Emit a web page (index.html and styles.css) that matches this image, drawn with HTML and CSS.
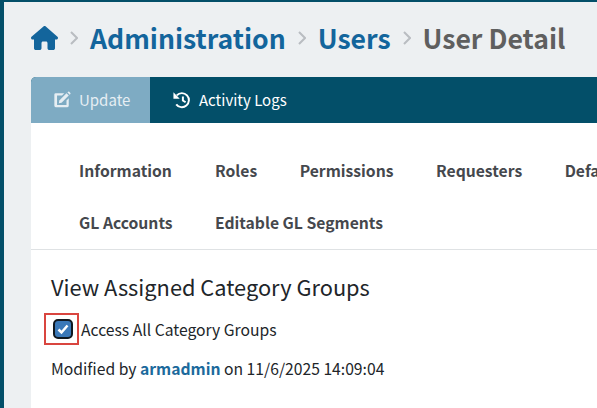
FILE: index.html
```html
<!DOCTYPE html>
<html>

<head>
	<title>User Detail</title>
	<link rel="stylesheet" href="styles.css">
</head>

<body>
	<div class="page">
		<div class="breadcrumb">
			<svg class="home-icon" viewBox="0 0 576 512"><path d="M575.800 255.500c0 18-15 32.100-32 32.100h-32l.7 160.200c0 2.700-.2 5.400-.5 8.100V472c0 22.100-17.900 40-40 40H392c-22.100 0-40-17.900-40-40V360c0-17.700-14.300-32-32-32h-64c-17.700 0-32 14.300-32 32v112c0 22.100-17.900 40-40 40H104c-22.100 0-40-17.900-40-40V287.500H32c-18 0-32-14-32-32.100 0-9 3-17 10-24L266.400 8c7-7 15-8 22-8s15 2 21 7l255.400 224.500c8 7 12 15 11 24z"/></svg>
			<svg class="chevron" viewBox="0 0 8 14"><path d="M1 1l6 6-6 6"/></svg>
			<a class="crumb">Administration</a>
			<svg class="chevron" viewBox="0 0 8 14"><path d="M1 1l6 6-6 6"/></svg>
			<a class="crumb">Users</a>
			<svg class="chevron" viewBox="0 0 8 14"><path d="M1 1l6 6-6 6"/></svg>
			<span class="crumb current">User Detail</span>
		</div>

		<div class="card">
			<div class="toolbar">
				<div class="tool tool-active">
					<svg class="tool-icon" viewBox="0 0 20 20"><path d="M3 2.500h9.500L10 5H4.500v10.500H15V10.500l2.500-2.500v8.500a1.500 1.500 0 0 1-1.500 1.500H3a1.500 1.500 0 0 1-1.500-1.500V4A1.500 1.500 0 0 1 3 2.500z"/><path d="M7 10.500L15 2.500 17.500 5 9.500 13l-3 .5z"/><path d="M16 1.500l.8-.6a1 1 0 0 1 1.300 0l1.200 1.200a1 1 0 0 1 0 1.300l-.8.8z"/></svg>
					Update
				</div>
				<div class="tool">
					<svg class="tool-icon" viewBox="0 0 20 20"><path class="history" d="M4.200 4.800A7.800 7.800 0 1 1 3.600 14.800"/><path d="M.5 1.500l7 7h-7z"/><path class="history" d="M11 6v4.500l3 2"/></svg>
					Activity Logs
				</div>
			</div>

			<div class="card-body">
				<div class="tabs">
					<div class="tab-row">
						<a class="tab tab-info">Information</a>
						<a class="tab">Roles</a>
						<a class="tab">Permissions</a>
						<a class="tab">Requesters</a>
						<a class="tab">Defaults</a>
					</div>
					<div class="tab-row">
						<a class="tab tab-info">GL Accounts</a>
						<a class="tab">Editable GL Segments</a>
					</div>
				</div>

				<div class="section">
					<h2>View Assigned Category Groups</h2>
					<div class="check-row">
						<span class="check-outline">
							<span class="checkbox">
								<svg viewBox="0 0 14 14"><path d="M2.500 7.500l3 3 6-7"/></svg>
							</span>
						</span>
						<label>Access All Category Groups</label>
					</div>
					<p class="modified">Modified by <a>armadmin</a> on 11/6/2025 14:09:04</p>
				</div>
			</div>
		</div>
	</div>
</body>

</html>
```

FILE: styles.css
```css
html,
body {
	height: 100%;
}

body {
	margin: 0;
	overflow: hidden;
	background-color: #edf0f2;
	font-family: "Noto Sans CJK SC", "Source Sans Pro", "Noto Sans", sans-serif;
	color: #212529;
}

.page {
	box-sizing: border-box;
	width: 640px;
	height: 408px;
	border-top: 2px solid #034f69;
	border-left: 4px solid #034f69;
	padding-left: 27px;
}

.breadcrumb {
	display: flex;
	align-items: center;
	box-sizing: border-box;
	height: 75px;
	padding-bottom: 3px;
	font-size: 26.600px;
	font-weight: 700;
	line-height: 36px;
	white-space: nowrap;
}

.home-icon {
	width: 27px;
	height: 24px;
	fill: #13659c;
}

.chevron {
	width: 8px;
	height: 14px;
	margin: 0 12px;
	fill: none;
	stroke: #b9bdc1;
	stroke-width: 2;
}

.crumb {
	color: #13659c;
}

.current {
	color: #5f5f5f;
}

.card {
	background-color: #fff;
	height: 331px;
	border-top-left-radius: 5px;
	overflow: hidden;
}

.toolbar {
	display: flex;
	height: 46px;
	background-color: #034f69;
	color: #fff;
	font-size: 15px;
	line-height: 46px;
}

.tool {
	display: flex;
	align-items: center;
	gap: 8px;
	padding-left: 23px;
}

.tool-active {
	width: 119px;
	box-sizing: border-box;
	padding-left: 22px;
	background-color: #7eabc3;
	color: #e6eef3;
}

.tool-icon {
	flex: none;
	width: 18px;
	height: 18px;
	fill: currentColor;
}

.history {
	fill: none;
	stroke: currentColor;
	stroke-width: 2.200;
}

.tabs {
	padding: 22px 0 0 48px;
	height: 127px;
	box-sizing: border-box;
	border-bottom: 1px solid #dfe2e4;
}

.tab-row {
	display: flex;
	height: 52px;
	align-items: center;
	white-space: nowrap;
}

.tab {
	flex: none;
	font-size: 15.700px;
	font-weight: 700;
	line-height: 20px;
	color: #45484d;
	margin-right: 42.500px;
}

.tab-info {
	width: 93px;
	margin-right: 43px;
}

.section {
	padding: 22px 20px 0;
}

h2 {
	margin: 0;
	font-size: 21.800px;
	font-weight: 400;
	line-height: 30px;
}

.check-row {
	display: flex;
	align-items: center;
	gap: 2px;
	margin-top: 11px;
	margin-left: -7px;
	height: 32px;
	font-size: 15.700px;
}

.check-outline {
	display: flex;
	align-items: center;
	justify-content: center;
	box-sizing: border-box;
	width: 35px;
	height: 32px;
	padding-left: 2px;
	border: 2px solid #d9453f;
}

.checkbox {
	display: flex;
	align-items: center;
	justify-content: center;
	box-sizing: border-box;
	width: 20px;
	height: 20px;
	border: 2px solid #101820;
	border-radius: 5px;
	background-color: #3a78b8;
}

.checkbox svg {
	width: 14px;
	height: 14px;
	fill: none;
	stroke: #fff;
	stroke-width: 2.500;
}

.modified {
	margin: 12px 0 0;
	font-size: 15.700px;
	line-height: 24px;
}

.modified a {
	font-weight: 700;
	color: #1c6a9c;
}
```
